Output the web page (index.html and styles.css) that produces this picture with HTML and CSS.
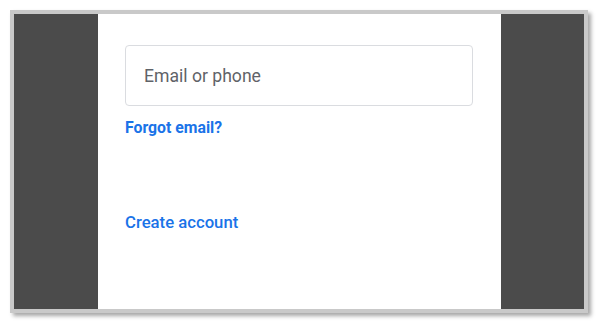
FILE: index.html
```html
<!DOCTYPE html>
<html>
<head>
<meta charset="utf-8">
<link rel="stylesheet" href="styles.css">
</head>
<body>
<div class="frame">
  <div class="side"></div>
  <main class="panel">
    <div class="field">Email or phone</div>
    <a class="link forgot">Forgot email?</a>
    <a class="link create">Create account</a>
  </main>
  <div class="side"></div>
</div>
</body>
</html>
```
FILE: styles.css
```css
html, body {
  margin: 0;
  padding: 0;
  background: #ffffff;
}
body {
  width: 600px;
  height: 324px;
  overflow: hidden;
  font-family: Roboto, "Liberation Sans", sans-serif;
}
.frame {
  margin: 10px 0 0 10px;
  width: 570px;
  height: 295px;
  border: 4px solid #c9c9c9;
  box-shadow: 3px 3px 4px rgba(0, 0, 0, 0.35);
  display: flex;
}
.side {
  width: 84px;
  background: #4b4b4b;
}
.side:last-child {
  width: 83px;
}
.panel {
  width: 403px;
  background: #ffffff;
  display: flex;
  flex-direction: column;
  align-items: flex-start;
  padding: 31px 0 0 27px;
  box-sizing: border-box;
}
.field {
  width: 348px;
  height: 61px;
  box-sizing: border-box;
  border: 1px solid #dadce0;
  border-radius: 4px;
  padding: 0 0 0 18px;
  display: flex;
  align-items: center;
  font-size: 17.6px;
  color: #5f6368;
}
.link {
  color: #1a73e8;
  text-decoration: none;
}
.forgot {
  margin-top: 12px;
  font-size: 15.8px;
  font-weight: 700;
  line-height: 20px;
}
.create {
  margin-top: 75px;
  font-size: 16.7px;
  font-weight: 500;
  line-height: 20px;
}
```
